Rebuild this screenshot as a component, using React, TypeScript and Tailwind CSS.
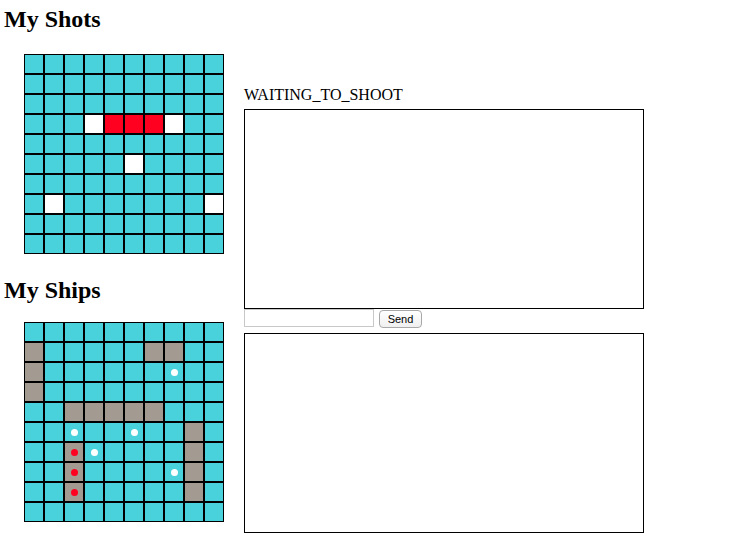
type Cell = "sea" | "miss" | "hit" | "ship";

const SEA = "bg-[#49d2dc]";

// shots board: what we fired at the other player
const shots: Record<string, Cell> = {
  "3-3": "miss",
  "3-4": "hit",
  "3-5": "hit",
  "3-6": "hit",
  "3-7": "miss",
  "5-5": "miss",
  "7-1": "miss",
  "7-9": "miss",
};

// own ships and the shots we received
const shipCells = [
  "1-0", "2-0", "3-0",
  "1-6", "1-7",
  "4-2", "4-3", "4-4", "4-5", "4-6",
  "5-8", "6-8", "7-8", "8-8",
  "6-2", "7-2", "8-2",
];
const received = ["2-7", "5-2", "5-5", "6-3", "7-7", "6-2", "7-2", "8-2"];

function ShotsGrid() {
  const cells = [];
  for (let r = 0; r < 10; r++) {
    for (let c = 0; c < 10; c++) {
      const v = shots[`${r}-${c}`] ?? "sea";
      const bg = v === "hit" ? "bg-[#ff0020]" : v === "miss" ? "bg-white" : SEA;
      cells.push(<div key={`${r}-${c}`} className={`w-5 h-5 border border-black ${bg}`} />);
    }
  }
  return <div className="grid grid-cols-10 w-[200px] ml-5">{cells}</div>;
}

function ShipsGrid() {
  const cells = [];
  for (let r = 0; r < 10; r++) {
    for (let c = 0; c < 10; c++) {
      const key = `${r}-${c}`;
      const ship = shipCells.includes(key);
      const shot = received.includes(key);
      cells.push(
        <div
          key={key}
          className={`w-5 h-5 border border-black flex items-center justify-center ${ship ? "bg-[#a39b92]" : SEA}`}
        >
          {shot && (
            <span className={`w-[7px] h-[7px] rounded-full ${ship ? "bg-[#ff0020]" : "bg-white"}`} />
          )}
        </div>
      );
    }
  }
  return <div className="grid grid-cols-10 w-[200px] ml-5">{cells}</div>;
}

export default function App() {
  return (
    <div className="flex h-[539px] w-[745px] bg-white text-black font-['Liberation_Serif',serif]">
      <div className="w-[244px] shrink-0 pl-1">
        <h2 className="text-[24px] font-bold leading-[27px] mt-[6px] mb-[21px]">My Shots</h2>
        <ShotsGrid />
        <h2 className="text-[24px] font-bold leading-[27px] mt-[23px] mb-[18px]">My Ships</h2>
        <ShipsGrid />
      </div>

      <div className="pt-[86px]">
        <div className="text-[16px] leading-[18px] mb-[5px]">WAITING_TO_SHOOT</div>
        <div className="w-[400px] h-[200px] border border-black" />
        <div className="flex items-start h-6">
          <input
            type="text"
            className="w-[130px] h-[18px] border border-[#c8c8c8] outline-none text-[12px] px-1"
          />
          <button className="ml-[5px] mt-px w-[43px] h-[18px] border border-[#a8a8a8] rounded-[4px] bg-gradient-to-b from-white to-[#f0f0f0] text-black text-[11px] leading-none font-['Liberation_Sans',sans-serif]">
            Send
          </button>
        </div>
        <div className="w-[400px] h-[200px] border border-black" />
      </div>
    </div>
  );
}
